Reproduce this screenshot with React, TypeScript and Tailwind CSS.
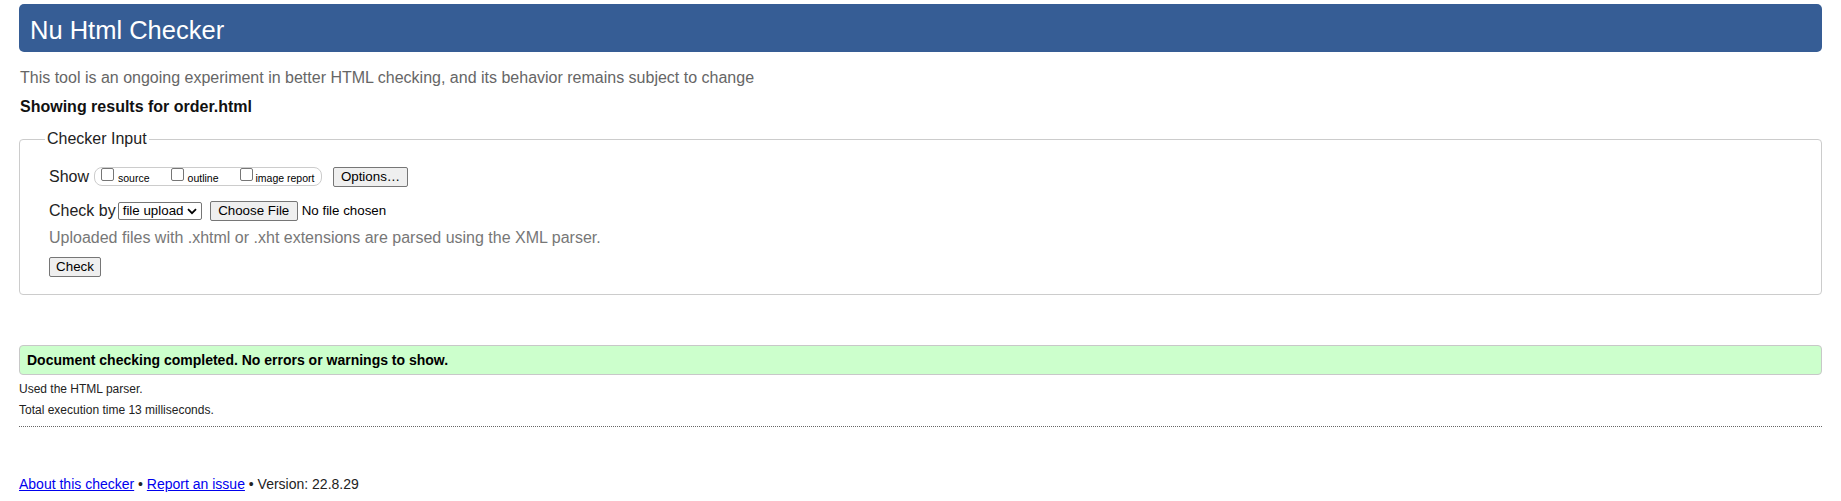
import React from "react";

function Checkbox() {
  return <span className="block w-[13px] h-[13px] shrink-0 border border-[#767676] rounded-[2px] bg-white" />;
}

function Btn({ children, w }: { children: React.ReactNode; w: string }) {
  return (
    <span
      className={`flex items-center justify-center h-[20px] ${w} border border-[#767676] rounded-[2px] bg-[#efefef] text-[13.33px] text-black leading-none`}
    >
      {children}
    </span>
  );
}

export default function App() {
  return (
    <div className="w-[1841px] min-h-[501px] bg-white text-[#222]" style={{ fontFamily: '"Liberation Sans", Arial, sans-serif' }}>
      <div className="mx-[19px] mt-[4px] h-[48px] rounded-[5px] bg-[#365d95] pt-[12px] pl-[11px] text-white text-[25.5px] leading-[29px]">
        Nu Html Checker
      </div>
      <p className="mx-[20px] mt-[17px] text-[16px] leading-[18px] text-[#666]">
        This tool is an ongoing experiment in better HTML checking, and its behavior remains subject to change
      </p>
      <p className="mx-[20px] mt-[11px] text-[16px] leading-[18px] font-bold text-[#111]">Showing results for order.html</p>

      <fieldset className="mx-[19px] mt-[14px] border border-[#cccccc] rounded-[4px] pl-[29px] pr-[20px] pt-[18px] pb-[17px]">
        <legend className="-ml-[4px] px-[2px] text-[16px] leading-[18px] text-[#222]">Checker Input</legend>

        <div className="flex items-center h-[21px]">
          <span className="text-[16px] leading-[18px]">Show</span>
          <div className="ml-[5px] flex h-[19px] w-[228px] border border-[#cccccc] rounded-[8px] pl-[6px]">
            <Checkbox />
            <span className="ml-[4px] mt-[3.5px] text-[10.5px] leading-[12px] text-black">source</span>
            <span className="ml-[21px]"><Checkbox /></span>
            <span className="ml-[4px] mt-[3.5px] text-[10.5px] leading-[12px] text-black">outline</span>
            <span className="ml-[21px]"><Checkbox /></span>
            <span className="ml-[3px] mt-[3.5px] text-[10.5px] leading-[12px] text-black">image report</span>
          </div>
          <span className="ml-[11px]">
            <Btn w="w-[75px]">Options…</Btn>
          </span>
        </div>

        <div className="flex items-center h-[20px] mt-[14px]">
          <span className="text-[16px] leading-[18px]">Check by</span>
          <span className="ml-[2px] flex items-center h-[18px] w-[84px] border border-[#767676] rounded-[2px] bg-white pl-[4px] text-[13.33px] text-black leading-none">
            file upload
            <svg className="ml-[4px]" width="10" height="7" viewBox="0 0 10 7">
              <path d="M1 1.2 L5 5.2 L9 1.2" fill="none" stroke="#000" strokeWidth="1.8" />
            </svg>
          </span>
          <span className="ml-[8px]">
            <Btn w="w-[88px]">Choose File</Btn>
          </span>
          <span className="ml-[4px] text-[13.33px] text-black">No file chosen</span>
        </div>

        <p className="mt-[8px] text-[16px] leading-[18px] text-[#777]">
          Uploaded files with .xhtml or .xht extensions are parsed using the XML parser.
        </p>
        <div className="mt-[10px] flex">
          <Btn w="w-[52px]">Check</Btn>
        </div>
      </fieldset>

      <div className="mx-[19px] mt-[50px] h-[30px] border border-[#c8c8c8] rounded-[4px] bg-[#ccffcc] pl-[7px] flex items-center">
        <span className="text-[14px] leading-[16px] font-bold text-black">
          Document checking completed. No errors or warnings to show.
        </span>
      </div>
      <p className="mx-[19px] mt-[7px] text-[12px] leading-[14px] text-[#222]">Used the HTML parser.</p>
      <p className="mx-[19px] mt-[7px] text-[12px] leading-[14px] text-[#222]">Total execution time 13 milliseconds.</p>
      <div className="mx-[19px] mt-[9px] border-t border-dotted border-[#666]" />

      <p className="mx-[19px] mt-[49px] text-[14px] leading-[16px] text-[#222]">
        <a className="text-[#0000ee] underline" href="#">About this checker</a>
        {" • "}
        <a className="text-[#0000ee] underline" href="#">Report an issue</a>
        {" • Version: 22.8.29"}
      </p>
    </div>
  );
}
